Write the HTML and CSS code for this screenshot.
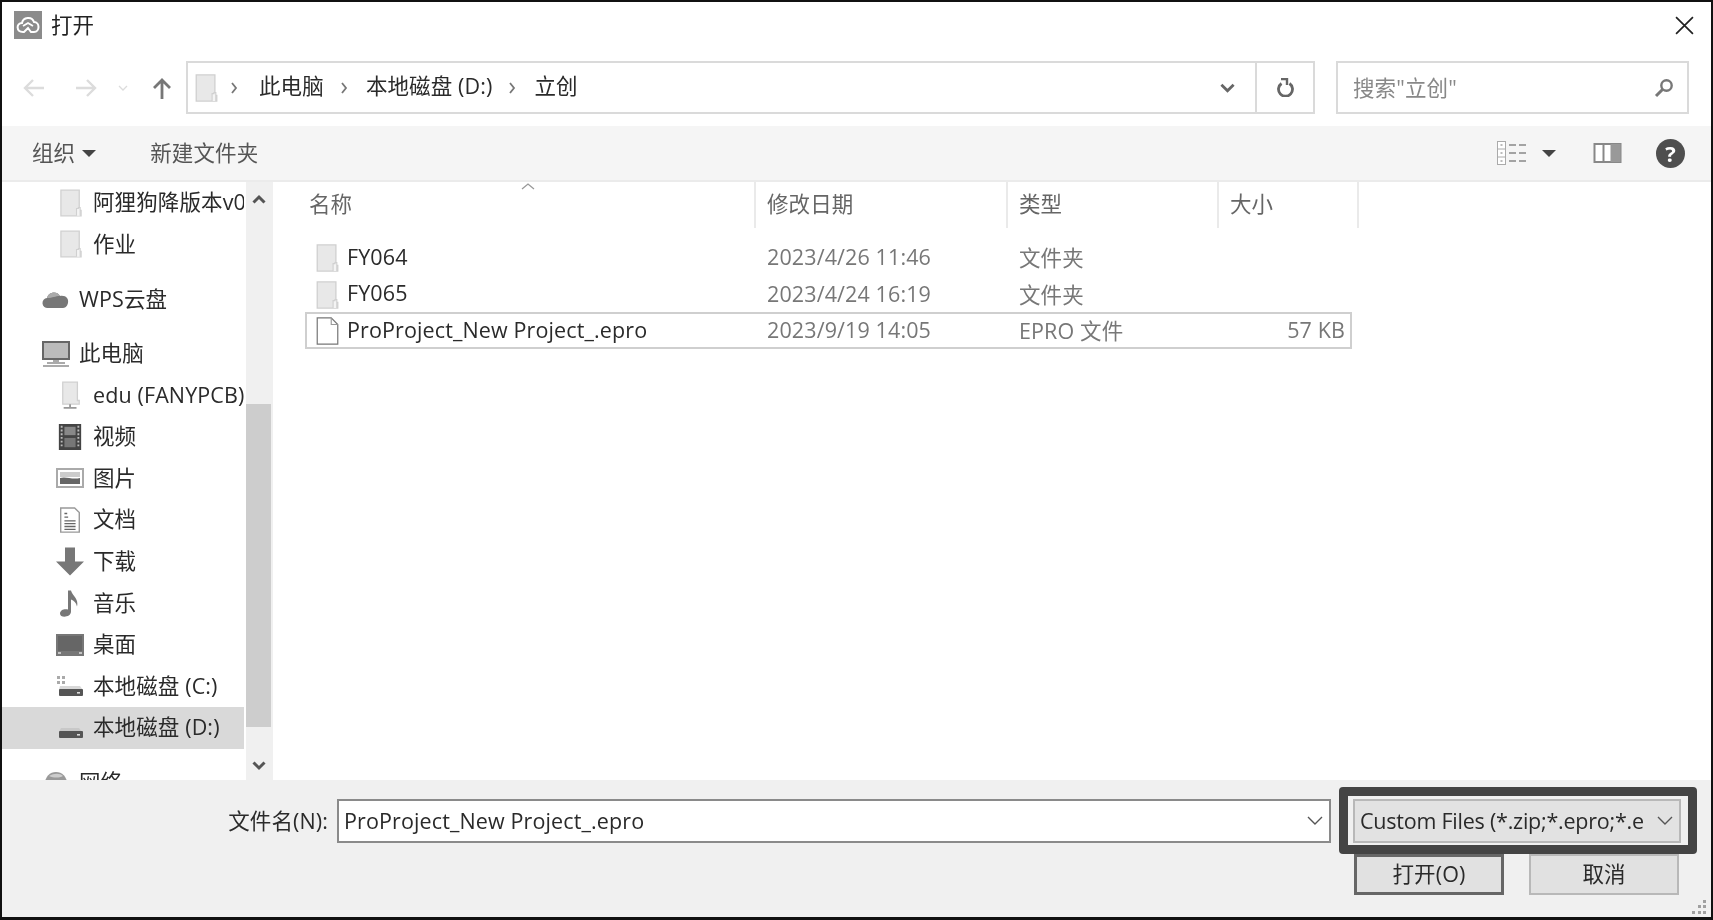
FILE: index.html
```html
<!DOCTYPE html>
<html lang="zh-CN">
<head>
<meta charset="utf-8">
<title>打开</title>
<link rel="stylesheet" href="styles.css">
</head>
<body>
<svg class="defs" width="0" height="0" aria-hidden="true">
  <symbol id="folder" viewBox="0 0 24 30">
    <path d="M1 1h20v22h2v6H1z" fill="#e8e8e8" stroke="#d0d0d0" stroke-width="1.4"/>
    <path d="M18 29v-8h2v-1h2v9" fill="#f4f4f4" stroke="#d0d0d0" stroke-width="1.2"/>
  </symbol>
</svg>
<div class="dialog">
  <header class="titlebar">
    <svg class="app-icon" viewBox="0 0 28 28"><rect width="28" height="28" fill="#8b8b8b"/><path d="M9 21c-7 0-7-9-1-9 1-6 10-7 12-1 6 0 6 10 0 10h-3l-3-4-4 4z" fill="none" stroke="#fff" stroke-width="2"/><path d="M9 15l5-3 5 3" fill="none" stroke="#fff" stroke-width="1.800"/></svg>
    <span class="title-text">打开</span>
    <svg class="close" viewBox="0 0 18 18"><path d="M1 1l16 16M17 1L1 17" stroke="#222" stroke-width="1.6" fill="none"/></svg>
  </header>

  <div class="navbar">
    <div class="nav-buttons">
      <svg class="nav-arrow" viewBox="0 0 22 20"><path d="M21 10H2M10 2l-8 8 8 8" fill="none" stroke="#dcdcdc" stroke-width="2.4"/></svg>
      <svg class="nav-arrow" viewBox="0 0 22 20"><path d="M1 10h19M12 2l8 8-8 8" fill="none" stroke="#dcdcdc" stroke-width="2.4"/></svg>
      <svg class="nav-recent" viewBox="0 0 10 6"><path d="M1 1l4 4 4-4" fill="none" stroke="#dcdcdc" stroke-width="1.3"/></svg>
      <svg class="nav-up" viewBox="0 0 20 22"><path d="M10 22V3M2 11l8-8 8 8" fill="none" stroke="#777" stroke-width="2.8"/></svg>
    </div>
    <div class="address">
      <svg class="addr-folder"><use href="#folder"/></svg>
      <svg class="crumb-sep crumb-sep-first" viewBox="0 0 8 12"><path d="M2 1l4 5-4 5" fill="none" stroke="#777" stroke-width="1.8"/></svg>
      <span class="crumb">此电脑</span>
      <svg class="crumb-sep" viewBox="0 0 8 12"><path d="M2 1l4 5-4 5" fill="none" stroke="#777" stroke-width="1.8"/></svg>
      <span class="crumb">本地磁盘 (D:)</span>
      <svg class="crumb-sep" viewBox="0 0 8 12"><path d="M2 1l4 5-4 5" fill="none" stroke="#777" stroke-width="1.8"/></svg>
      <span class="crumb">立创</span>
      <span class="addr-drop"><svg class="addr-chev" viewBox="0 0 16 10"><path d="M1.500 1.500L8 8l6.500-6.500" fill="none" stroke="#666" stroke-width="3"/></svg></span>
      <span class="addr-refresh"><svg class="refresh" viewBox="0 0 17 19"><path d="M4.500 5.500a7 7 0 1 0 8 0" fill="none" stroke="#666" stroke-width="2.800"/><path d="M4 1h6v6" fill="none" stroke="#666" stroke-width="2.400"/></svg></span>
    </div>
    <div class="search">
      <span class="search-text">搜索"立创"</span>
      <svg class="search-icon" viewBox="0 0 20 20"><circle cx="12.5" cy="7.5" r="5.2" fill="none" stroke="#777" stroke-width="2.4"/><path d="M8.5 11.5L2 18" stroke="#777" stroke-width="3"/></svg>
    </div>
  </div>

  <div class="toolbar">
    <span class="tool-text">组织</span>
    <span class="caret organise-caret"></span>
    <span class="tool-text new-folder">新建文件夹</span>
    <span class="toolbar-spacer"></span>
    <svg class="view-icon" viewBox="0 0 30 24"><rect x=".5" y=".5" width="8" height="23" fill="#fff" stroke="#aaa"/><path d="M1 8h7M1 16h7" stroke="#aaa"/><path d="M3.500 4h2M3.500 12h2M3.500 20h2" stroke="#777"/><path d="M12 4h7M22 4h7M12 12h7M22 12h7M12 20h7M22 20h7" stroke="#888" stroke-width="1.5"/></svg>
    <span class="caret view-caret"></span>
    <svg class="pane-icon" viewBox="0 0 28 20"><rect x="1" y="1" width="26" height="18" fill="#fff" stroke="#888" stroke-width="2"/><path d="M10 1v18" stroke="#888" stroke-width="2"/><rect x="17" y="1" width="10" height="18" fill="#999"/></svg>
    <span class="help">?</span>
  </div>

  <main class="main">
    <nav class="tree">
      <div class="tree-list">
        <div class="row child"><svg class="ico-folder"><use href="#folder"/></svg><span class="row-text">阿狸狗降版本v0.</span></div>
        <div class="row child"><svg class="ico-folder"><use href="#folder"/></svg><span class="row-text">作业</span></div>
        <div class="row parent group"><svg class="ico-wide" viewBox="0 0 28 22"><path d="M6 20a5 5 0 0 1-1-10c1-6 10-8 13-2 6-1 9 3 8 7s-3 5-6 5z" fill="#777"/><path d="M5 10c1-6 10-8 13-2-5 0-7 2-13 2z" fill="#aaa"/></svg><span class="row-text">WPS云盘</span></div>
        <div class="row parent group"><svg class="ico-wide" viewBox="0 0 28 26"><rect x="1" y="1" width="26" height="17" fill="#bbb" stroke="#666" stroke-width="2"/><path d="M11 19h6v2h-6z" fill="#aaa"/><path d="M5 22h18M1 25h26" stroke="#aaa" stroke-width="2"/></svg><span class="row-text">此电脑</span></div>
        <div class="row child"><svg class="ico-folder" viewBox="0 0 24 30"><path d="M3 1h16v20h2v4H3z" fill="#e8e8e8" stroke="#d0d0d0" stroke-width="1.4"/><path d="M11 25v3M4 29h14" stroke="#999" stroke-width="2"/></svg><span class="row-text">edu (FANYPCB)</span></div>
        <div class="row child"><svg class="ico-wide" viewBox="0 0 26 28"><rect x="1" y="0" width="24" height="28" fill="#444"/><path d="M4 2v24M22 2v24" stroke="#bbb" stroke-width="2" stroke-dasharray="2 2"/><rect x="7" y="3" width="12" height="9" fill="#888"/><rect x="7" y="15" width="12" height="10" fill="#777"/></svg><span class="row-text">视频</span></div>
        <div class="row child"><svg class="ico-wide" viewBox="0 0 28 20"><rect x="1" y="1" width="26" height="18" fill="#fff" stroke="#aaa" stroke-width="2"/><rect x="4" y="4" width="20" height="5" fill="#ccc"/><path d="M4 10c6-2 12 2 20 0v6H4z" fill="#666"/></svg><span class="row-text">图片</span></div>
        <div class="row child"><svg class="ico-wide" viewBox="0 0 28 28"><path d="M4 1h15l5 5v21H4z" fill="#fff" stroke="#999" stroke-width="1.5"/><path d="M8 7h3M8 11h4M8 15h12M8 18h12M8 21h12M8 24h12" stroke="#666" stroke-width="1.4"/></svg><span class="row-text">文档</span></div>
        <div class="row child"><svg class="ico-wide ico-tall" viewBox="0 0 28 28"><path d="M9 0h10v14h9L14 28 0 14h9z" fill="#777"/></svg><span class="row-text">下载</span></div>
        <div class="row child"><svg class="ico-wide ico-tall" viewBox="0 0 28 28"><path d="M12 1h3c1 5 8 8 6 16-1-4-3-6-6-7v12c0 6-11 7-11 2 0-4 5-5 8-4z" fill="#777"/></svg><span class="row-text">音乐</span></div>
        <div class="row child"><svg class="ico-wide" viewBox="0 0 28 22"><rect y="0" width="28" height="22" fill="#777"/><rect x="2" y="2" width="24" height="15" fill="#666"/><path d="M2 19h3M23 19h3" stroke="#ddd" stroke-width="1.500"/></svg><span class="row-text">桌面</span></div>
        <div class="row child"><svg class="ico-wide" viewBox="0 0 28 22"><path d="M1 1h3v3H1zM6 1h3v3H6zM1 6h3v3H1zM6 6h3v3H6z" fill="#aaa"/><path d="M4 11h20l3 4H3z" fill="#d8d8d8"/><rect x="3" y="14" width="24" height="7" rx="1" fill="#555"/><rect x="21" y="17" width="3" height="1.600" fill="#ddd"/></svg><span class="row-text">本地磁盘 (C:)</span></div>
        <div class="row child selected"><svg class="ico-wide" viewBox="0 0 28 22"><path d="M5 11h18l3 4H3z" fill="#c8c8c8"/><rect x="3" y="14" width="24" height="7" rx="1" fill="#555"/><rect x="21" y="17" width="3" height="1.600" fill="#ddd"/></svg><span class="row-text">本地磁盘 (D:)</span></div>
        <div class="row parent group"><svg class="ico-wide" viewBox="0 0 26 26"><circle cx="13" cy="13" r="11" fill="#999"/><path d="M6 6c5-3 11-3 14 0-4 2-9 2-14 0z" fill="#ccc"/></svg><span class="row-text">网络</span></div>
      </div>
      <div class="scrollbar">
        <svg class="sb-arrow sb-up" viewBox="0 0 14 10"><path d="M1.500 8.500L7 3l5.500 5.500" fill="none" stroke="#555" stroke-width="3"/></svg>
        <div class="sb-track"><div class="sb-thumb"></div></div>
        <svg class="sb-arrow sb-down" viewBox="0 0 14 10"><path d="M1.500 1.500L7 7l5.500-5.500" fill="none" stroke="#555" stroke-width="3"/></svg>
      </div>
    </nav>

    <section class="files">
      <div class="file-head">
        <span class="col col-name">名称<svg class="sort" viewBox="0 0 14 7"><path d="M1 6l6-5 6 5" fill="none" stroke="#999" stroke-width="1.300"/></svg></span>
        <span class="col col-date">修改日期</span>
        <span class="col col-type">类型</span>
        <span class="col col-size">大小</span>
      </div>
      <div class="file-rows">
        <div class="file">
          <span class="cell-name"><svg class="file-ico"><use href="#folder"/></svg><span class="cell-label">FY064</span></span>
          <span class="cell-date">2023/4/26 11:46</span>
          <span class="cell-type">文件夹</span>
          <span class="cell-size"></span>
        </div>
        <div class="file">
          <span class="cell-name"><svg class="file-ico"><use href="#folder"/></svg><span class="cell-label">FY065</span></span>
          <span class="cell-date">2023/4/24 16:19</span>
          <span class="cell-type">文件夹</span>
          <span class="cell-size"></span>
        </div>
        <div class="file file-selected">
          <span class="cell-name"><svg class="file-ico" viewBox="0 0 24 30"><path d="M1 1h15l7 7v21H1z" fill="#fff" stroke="#777" stroke-width="1.300"/><path d="M16 1v7h7" fill="none" stroke="#999" stroke-width="1.200"/></svg><span class="cell-label">ProProject_New Project_.epro</span></span>
          <span class="cell-date">2023/9/19 14:05</span>
          <span class="cell-type">EPRO 文件</span>
          <span class="cell-size">57 KB</span>
        </div>
      </div>
    </section>
  </main>

  <footer class="footer">
    <div class="footer-top">
      <span class="name-label">文件名(N):</span>
      <div class="name-input">
        <span class="name-value">ProProject_New Project_.epro</span>
        <svg class="combo-chev" viewBox="0 0 16 10"><path d="M1 1l7 7 7-7" fill="none" stroke="#555" stroke-width="1.400"/></svg>
      </div>
      <div class="filter">
        <span class="filter-value">Custom Files (*.zip;*.epro;*.e</span>
        <svg class="combo-chev" viewBox="0 0 16 10"><path d="M1 1l7 7 7-7" fill="none" stroke="#555" stroke-width="1.400"/></svg>
        <span class="highlight"></span>
      </div>
    </div>
    <div class="footer-bottom">
      <button class="btn btn-primary">打开(O)</button>
      <button class="btn">取消</button>
    </div>
    <svg class="grip" viewBox="0 0 14 15"><path d="M11 0h3v3h-3zM11 5h3v3h-3zM6 5h3v3H6zM11 11h3v3h-3zM6 11h3v3H6zM0 11h3v3H0z" fill="#a0a0a0"/></svg>
  </footer>
</div>
</body>
</html>
```

FILE: styles.css
```css
* { box-sizing: border-box; }
html, body { margin: 0; padding: 0; background: #fff; }
body {
  width: 1713px;
  height: 920px;
  overflow: hidden;
  font-family: "Open Sans", "Noto Sans CJK SC", sans-serif;
  font-size: 21.5px;
  letter-spacing: .12px;
  color: #2a2a2a;
}
.defs { position: absolute; }
.dialog {
  width: 1713px;
  height: 920px;
  display: flex;
  flex-direction: column;
  border: solid #111;
  border-width: 2px 2px 3px 2px;
  background: #fff;
  filter: blur(.7px);
}

/* title */
.titlebar {
  height: 50px;
  display: flex;
  align-items: center;
  padding: 0 17px 4px 12px;
  flex: none;
}
.app-icon { width: 28px; height: 28px; }
.title-text { margin-left: 9px; color: #222; line-height: 1.3; }
.close { width: 19px; height: 19px; margin-left: auto; }

/* nav */
.navbar {
  height: 74px;
  flex: none;
  display: flex;
  padding: 9px 20px 12px 0;
}
.nav-buttons { width: 184px; display: flex; align-items: center; padding-left: 21px; }
.nav-arrow { width: 22px; height: 20px; margin-right: 30px; }
.nav-recent { width: 10px; height: 6px; margin-left: -9px; }
.nav-up { width: 20px; height: 22px; margin-left: 24px; }
.address {
  width: 1129px;
  height: 53px;
  border: 2px solid #dadada;
  display: flex;
  align-items: center;
  padding-left: 7px;
}
.addr-folder { width: 23px; height: 28px; }
.crumb-sep { width: 8px; height: 12px; margin: 0 18px 0 16px; }
.crumb-sep-first { margin: 0 21px 0 12px; }
.crumb { white-space: nowrap; line-height: 1.3; padding-bottom: 4px; }
.addr-drop { margin-left: auto; width: 56px; display: flex; justify-content: center; }
.addr-chev { width: 15px; height: 10px; }
.addr-refresh {
  width: 58px;
  height: 100%;
  border-left: 2px solid #dadada;
  display: flex;
  align-items: center;
  justify-content: center;
}
.refresh { width: 17px; height: 19px; }
.search {
  width: 353px;
  height: 53px;
  margin-left: 21px;
  border: 2px solid #dadada;
  display: flex;
  align-items: center;
  padding: 0 13px 0 15px;
}
.search-text { color: #888; line-height: 1.3; }
.search-icon { width: 20px; height: 20px; margin-left: auto; }

/* toolbar */
.toolbar {
  height: 56px;
  flex: none;
  background: #f5f5f5;
  border-bottom: 2px solid #ebebeb;
  display: flex;
  align-items: center;
  padding: 0 26px 0 30px;
  color: #555;
}
.tool-text { line-height: 1.3; }
.caret { width: 0; height: 0; border: 7px solid transparent; border-top: 7px solid #444; border-bottom: 0; }
.organise-caret { margin-left: 7px; }
.new-folder { margin-left: 54px; }
.toolbar-spacer { flex: 1; }
.view-icon { width: 30px; height: 24px; }
.view-caret { margin-left: 15px; }
.pane-icon { width: 29px; height: 20px; margin-left: 37px; }
.help {
  width: 29px;
  height: 29px;
  margin-left: 34px;
  border-radius: 50%;
  background: #4f4f4f;
  color: #fff;
  font-weight: 700;
  font-size: 22px;
  line-height: 29px;
  text-align: center;
}

/* main */
.main { flex: 1; min-height: 0; display: flex; overflow: hidden; }
.tree { width: 271px; flex: none; display: flex; overflow: hidden; }
.tree-list { width: 242px; flex: none; }
.row {
  height: 41.6px;
  display: flex;
  align-items: center;
  white-space: nowrap;
  overflow: hidden;
}
.group { margin-top: 13px; }
.child { padding-left: 54px; }
.parent { padding-left: 40px; }
.row-text { margin-left: 9px; line-height: 1.3; padding-bottom: 1px; }
.ico-folder { width: 22px; height: 28px; margin: 0 2px 0 4px; flex: none; }
.ico-wide { width: 28px; height: 26px; flex: none; }
.ico-tall { height: 29px; }
.selected { background: #d9d9d9; }
.scrollbar {
  width: 27px;
  margin-left: 2px;
  background: #f0f0f0;
  display: flex;
  flex-direction: column;
}
.sb-arrow { width: 14px; height: 10px; flex: none; margin-left: 6px; }
.sb-up { margin-top: 12px; margin-bottom: 14px; }
.sb-down { margin-top: 14px; margin-bottom: 9px; }
.sb-track { flex: 1; width: 100%; padding: 186px 0 20px; }
.sb-thumb { height: 323px; width: 25px; background: #cdcdcd; }

/* files */
.files { flex: 1; min-width: 0; padding-left: 32px; }
.file-head { display: grid; grid-template-columns: 451px 252px 211px 140px; height: 46px; color: #666; }
.col { border-right: 2px solid #eaeaea; padding: 9px 0 0 11px; line-height: 26px; position: relative; }
.col-name { padding-left: 4px; }
.sort { position: absolute; left: 216px; top: 1px; width: 14px; height: 7px; }
.file-rows { padding-top: 11px; }
.file {
  height: 36.5px;
  width: 1047px;
  display: grid;
  grid-template-columns: 451px 252px 211px 1fr;
  align-items: center;
  border: 2px solid transparent;
}
.file-selected { border-color: #cfcfcf; }
.cell-name { display: flex; align-items: center; padding-left: 9px; white-space: nowrap; }
.cell-label { padding-bottom: 4px; }
.file-ico { width: 23px; height: 28px; margin-right: 8px; flex: none; }
.cell-date, .cell-type { color: #777; padding: 0 0 3px 11px; margin-left: -2px; }
.cell-size { color: #777; text-align: right; padding: 0 5px 3px 0; }

/* footer */
.footer { height: 137px; flex: none; background: #f0f0f0; position: relative; padding: 19px 0 0 0; }
.footer-top { display: flex; align-items: center; height: 44px; }
.name-label { width: 335px; padding-right: 9px; text-align: right; line-height: 1.3; }
.name-input {
  width: 994px;
  height: 44px;
  background: #fff;
  border: 2px solid #8a8a8a;
  display: flex;
  align-items: center;
  padding: 0 6px 0 5px;
}
.name-value { white-space: nowrap; line-height: 1.3; }
.combo-chev { width: 16px; height: 10px; margin-left: auto; flex: none; }
.filter {
  position: relative;
  width: 328px;
  height: 44px;
  margin-left: 22px;
  background: #e2e2e2;
  border: 2px solid #b8b8b8;
  display: flex;
  align-items: center;
  padding: 0 6px 0 5px;
}
.filter-value { white-space: nowrap; line-height: 1.3; letter-spacing: -.23px; }
.highlight {
  position: absolute;
  left: -16px;
  top: -14px;
  right: -18px;
  bottom: -13px;
  border: 9px solid #444;
  border-radius: 4px;
}
.footer-bottom { display: flex; margin-top: 11px; padding-left: 1352px; }
.btn {
  width: 150px;
  height: 41px;
  margin-right: 25px;
  background: #e1e1e1;
  border: 2px solid #b8b8b8;
  font: inherit;
  letter-spacing: inherit;
  color: #2a2a2a;
  padding: 0 0 4px;
}
.btn-primary { border: 3px solid #666; }
.grip { position: absolute; right: 5px; bottom: 2px; width: 14px; height: 15px; }
```
